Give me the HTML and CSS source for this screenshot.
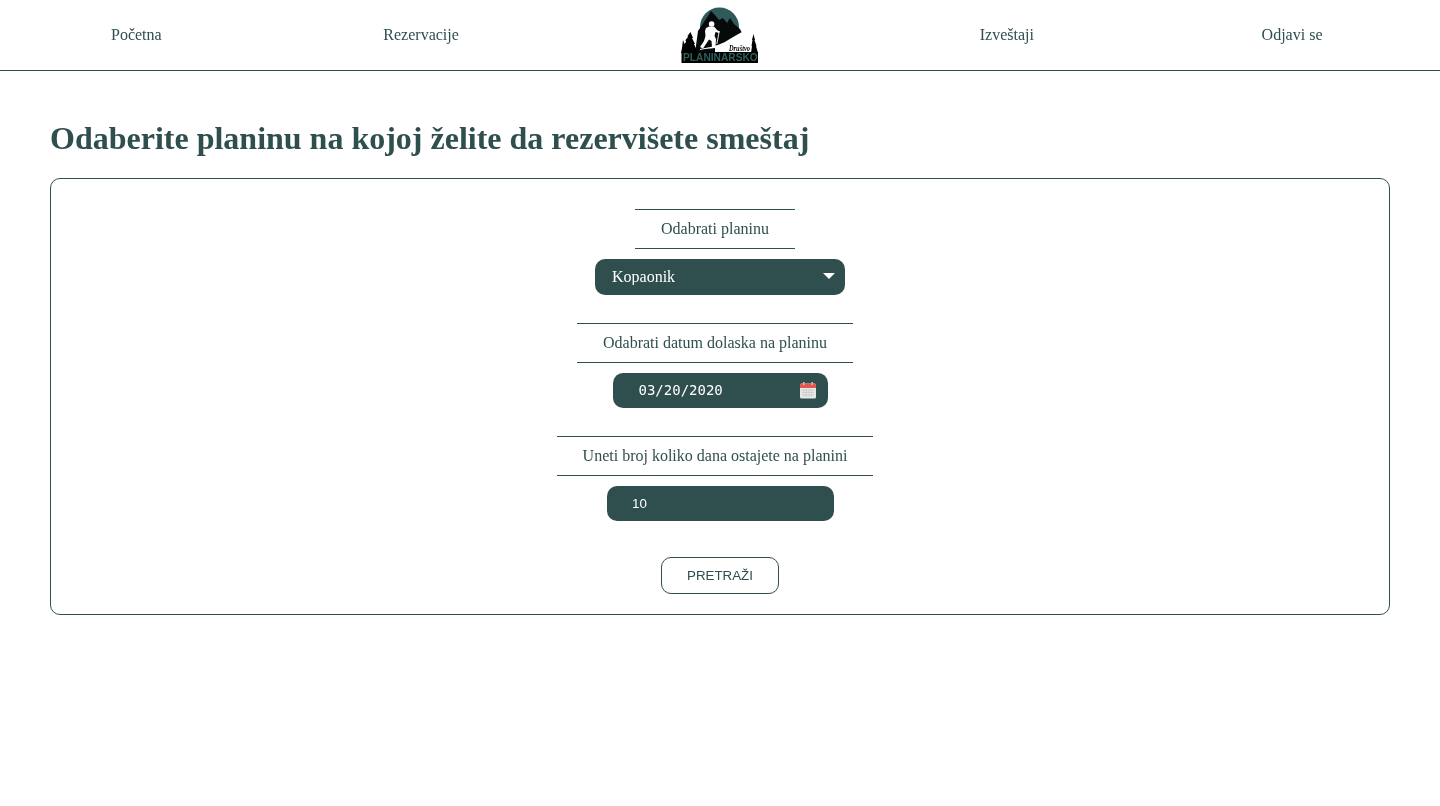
FILE: index.html
```html
<!DOCTYPE html>
<html lang="sr">
<head>
<meta charset="utf-8">
<title>Planinarsko društvo</title>
<link rel="stylesheet" href="styles.css">
</head>
<body>
<header class="nav">
  <a class="nav-link" href="#">Početna</a>
  <a class="nav-link" href="#">Rezervacije</a>
  <a class="logo" href="#" aria-label="Planinarsko društvo">
    <svg width="77" height="56" viewBox="0 0 77 56">
      <circle cx="38.5" cy="20" r="19.5" fill="#2f5a5a"/>
      <path d="M17 24 L23 15 L27 9 L30 4 L34 8 L38 13 L42 11 L46 16 L49 11 L53 17 L59 22 L63 30 L64 46 L14 46 Z" fill="#060a0a"/>
      <path d="M19 42 C28 40.5 36 39 44 35 C49 32 55 28 61 25 L64 29 L66 34 L69 45 L34 45 L34 41 C28 41.5 24 42 19 43 Z" fill="#fff"/>
      <circle cx="30.6" cy="17" r="2.8" fill="#fff"/>
      <path d="M25 21 L28 19.5 L33 19.5 L36 23 L38.5 24.5 L38 26 L34.5 25 L33.5 29 L35 32 L34.5 40 L31 40 L30.5 34 L28 32.5 L25 37 L22 41.5 L19 40 L23 34 L24.5 29 L24 24 Z" fill="#fff"/>
      <path d="M38.3 24 L35.8 37" stroke="#fff" stroke-width="0.9" fill="none"/>
      <path d="M9.5 25 L12 31 L11 31 L14 37 L13 37 L17 46 L0 46 L1 41 L2 33 L3.5 37 L5 35 L4.5 33 L7 30 L6.5 29 Z" fill="#000"/>
      <path d="M72.5 27 L74 33 L73.5 33 L75.5 39 L75 39 L77 46 L70 46 L71 39 L70.5 39 L71.5 33 L71 33 Z" fill="#000"/>
      <rect x="0.5" y="45" width="76.5" height="11" fill="#000"/>
      <text class="logo-script" x="48" y="44" textLength="21" lengthAdjust="spacingAndGlyphs">Društvo</text>
      <text class="logo-name" x="2" y="54.2">PLANINARSKO</text>
    </svg>
  </a>
  <a class="nav-link" href="#">Izveštaji</a>
  <a class="nav-link nav-link-last" href="#">Odjavi se</a>
</header>

<main class="page">
  <h1 class="title">Odaberite planinu na kojoj želite da rezervišete smeštaj</h1>
  <form class="card">
    <div class="field">
      <label class="field-label" for="planina">Odabrati planinu</label>
      <div class="select-wrap">
        <select class="control control-select" id="planina">
          <option>Kopaonik</option>
        </select>
        <span class="caret"></span>
      </div>
    </div>
    <div class="field">
      <label class="field-label" for="datum">Odabrati datum dolaska na planinu</label>
      <div class="date-wrap">
        <input class="control control-date" id="datum" type="text" value="03/20/2020">
        <svg class="date-icon" width="18" height="18" viewBox="0 0 18 18">
          <rect x="1" y="2.5" width="16" height="15" rx="1.5" fill="#e8e8e6"/>
          <path d="M1 7 V4 a1.5 1.5 0 0 1 1.5 -1.5 h13 a1.5 1.5 0 0 1 1.5 1.5 V7 Z" fill="#e2584c"/>
          <rect x="4" y="1" width="1.6" height="3" fill="#b9b9b6"/>
          <rect x="12.4" y="1" width="1.6" height="3" fill="#b9b9b6"/>
          <path d="M2.5 9 H15.5 M2.5 11.5 H15.5 M2.5 14 H15.5 M5 8 V16 M7.5 8 V16 M10 8 V16 M12.5 8 V16" stroke="#c4c8c9" stroke-width="0.7" fill="none"/>
        </svg>
      </div>
    </div>
    <div class="field field-last">
      <label class="field-label" for="dani">Uneti broj koliko dana ostajete na planini</label>
      <input class="control control-number" id="dani" type="text" value="10">
    </div>
    <button class="submit" type="button">PRETRAŽI</button>
  </form>
</main>
</body>
</html>
```

FILE: styles.css
```css
* {
  box-sizing: border-box;
}

html,
body {
  margin: 0;
  background: #fff;
}

body {
  color: #2f4f4f;
  font-family: "Liberation Serif", "Times New Roman", serif;
  font-size: 16px;
  min-height: 806px;
}

.nav,
.page {
  will-change: opacity;
}

.nav {
  display: flex;
  align-items: center;
  gap: 221.7px;
  height: 71px;
  padding-left: 111px;
  border-bottom: 1px solid #2f4f4f;
}

.nav-link {
  color: #2f4f4f;
  text-decoration: none;
  line-height: 18px;
}

.nav-link-last {
  margin-left: 6px;
}

.logo {
  display: block;
  width: 77px;
  height: 56px;
  margin-top: -1px;
  margin-right: 0.5px;
}

.logo svg {
  display: block;
}

.logo-name {
  font-family: "Liberation Sans", Arial, sans-serif;
  font-size: 10.2px;
  font-weight: 700;
  fill: #2f5f5c;
}

.logo-script {
  font-family: "Liberation Serif", serif;
  font-size: 7.5px;
  font-style: italic;
  font-weight: 700;
  fill: #000;
}

.page {
  padding: 0 50px;
}

.title {
  margin: 49px 0 21px;
  font-size: 32px;
  line-height: 37px;
  font-weight: 700;
}

.card {
  display: flex;
  flex-direction: column;
  align-items: center;
  height: 437px;
  padding: 30px 0 20px;
  border: 1px solid #2f4f4f;
  border-radius: 10px;
}

.field {
  display: flex;
  flex-direction: column;
  align-items: center;
  margin-bottom: 28px;
}

.field-last {
  margin-bottom: 36px;
}

.field-label {
  margin: 0 10px 10px 0;
  padding: 10px 25.75px;
  border-top: 1px solid #2f4f4f;
  border-bottom: 1px solid #2f4f4f;
  line-height: 18px;
}

.select-wrap,
.date-wrap {
  position: relative;
}

.control {
  display: block;
  border: 0;
  outline: 0;
  border-radius: 10px;
  background: #2f4f4f;
  color: #fff;
}

.control-select {
  width: 250px;
  height: 36px;
  padding: 0 17px 1px;
  appearance: none;
  font-family: "Liberation Serif", serif;
  font-size: 16px;
}

.caret {
  position: absolute;
  right: 10px;
  top: 14px;
  width: 0;
  height: 0;
  border-left: 6px solid transparent;
  border-right: 6px solid transparent;
  border-top: 6px solid #fff;
}

.control-date {
  width: 215px;
  height: 35px;
  padding: 0 26px 2px;
  font-family: "DejaVu Sans Mono", monospace;
  font-size: 14px;
}

.date-icon {
  position: absolute;
  right: 11px;
  top: 8px;
}

.control-number {
  width: 227px;
  height: 35px;
  margin-left: 1px;
  padding: 0 25px;
  font-family: "Liberation Sans", Arial, sans-serif;
  font-size: 13.33px;
}

.submit {
  width: 118px;
  height: 37px;
  padding: 0;
  border: 1px solid #2f4f4f;
  border-radius: 10px;
  background: transparent;
  color: #2f4f4f;
  font-family: "Liberation Sans", Arial, sans-serif;
  font-size: 13.33px;
}
```
